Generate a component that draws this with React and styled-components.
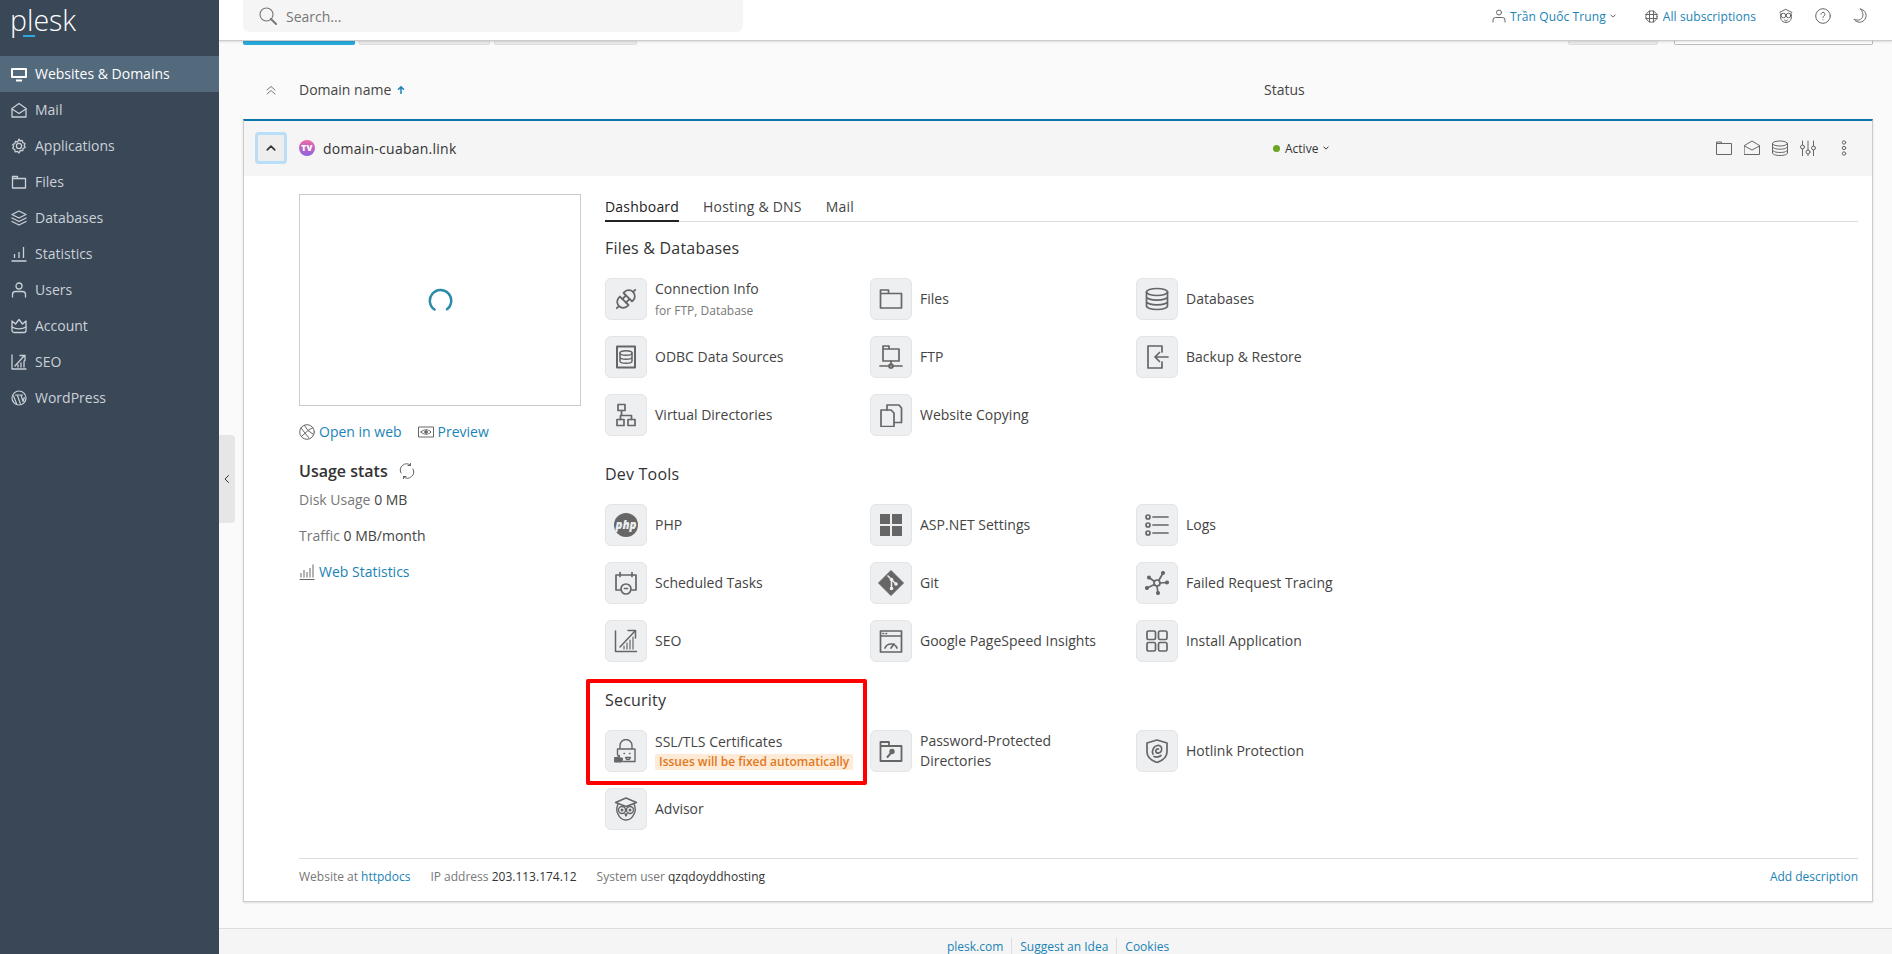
import React from "react";
import styled, { createGlobalStyle } from "styled-components";

const Global = createGlobalStyle`
  html, body { margin: 0; padding: 0; height: 100%; overflow: hidden; }
  body { font-family: "Open Sans", "Liberation Sans", sans-serif; font-size: 14px; color: #333; }
  * { box-sizing: border-box; }
`;

const Page = styled.div`display: flex; width: 1892px; height: 954px; overflow: hidden; background: #fafafa;`;
const Sidebar = styled.aside`flex: 0 0 219px; background: #394757; display: flex; flex-direction: column;`;
const LogoBox = styled.div`position: relative; height: 56px; padding: 0 0 0 10px; color: #fff; font-family: "Open Sans", sans-serif; font-weight: 300; font-size: 28.5px; line-height: 40px;`;
const LogoDash = styled.span`position: absolute; left: 23px; top: 35px; width: 12px; height: 2px; background: #28aade;`;
const NavItem = styled.div`
  height: 36px; display: flex; align-items: center; gap: 8px; padding: 0 0 1px 11px; font-size: 14px;
  color: ${p => (p.$active ? "#fff" : "#cbd1d7")};
  background: ${p => (p.$active ? "#53697c" : "transparent")};
`;
const Main = styled.div`flex: 1; min-width: 0; position: relative; display: flex; flex-direction: column;`;
const Handle = styled.div`position: absolute; left: 0; top: 435px; width: 16px; height: 88px; background: #e6e6e6; border-radius: 0 4px 4px 0; display: flex; align-items: center; justify-content: center; color: #333; z-index: 3;`;
const Header = styled.header`flex: 0 0 41px; height: 41px; background: #fff; border-bottom: 1px solid #ccc; box-shadow: 0 1px 2px rgba(0,0,0,.12); display: flex; align-items: flex-start; padding-left: 24px; position: relative; z-index: 2;`;
const Search = styled.div`width: 500px; height: 32px; background: #f5f5f5; border-radius: 0 0 6px 6px; display: flex; align-items: center; gap: 9px; padding-left: 16px; color: #777; font-size: 14px;`;
const HeaderRight = styled.div`margin-left: auto; height: 32px; display: flex; align-items: center; color: #666;`;
const HeaderLink = styled.span`font-size: 12px; color: #1a83b5; letter-spacing: .1px; font-weight: 500;`;
const HeaderGroup = styled.div`display: flex; align-items: center; gap: ${p => p.$gap || 4}px; margin-left: ${p => p.$ml || 0}px; color: #666;`;
const Content = styled.div`flex: 1; padding: 0 19px 0 24px; min-height: 0;`;
const Strip = styled.div`height: 4px; display: flex; gap: 4px;`;
const StripTab = styled.div`
  width: ${p => p.$w}px; height: 4px; margin-left: ${p => p.$ml || 0}px;
  background: ${p => (p.$blue ? "#28a9dc" : p.$white ? "#fff" : "#ebebeb")};
  border: 1px solid ${p => (p.$blue ? "#28a9dc" : p.$white ? "#bbb" : "#ddd")};
  border-top: 0; border-radius: 0 0 2px 2px;
`;
const Columns = styled.div`display: grid; grid-template-columns: 56px 965px 1fr; align-items: center;`;
const HeadRow = styled(Columns)`height: 74px; padding-top: 15px; color: #444; font-size: 14px;`;
const NameHead = styled.div`display: flex; align-items: center; gap: 6px;`;
const CenterCell = styled.div`display: flex; justify-content: center; color: #777;`;
const SortMark = styled.span`display: inline-flex; color: #1a83b5;`;
const Panel = styled.section`background: #fff; border: 1px solid #ccc; border-top: 2px solid #0a77a8; box-shadow: 0 1px 2px rgba(0,0,0,.12); height: 783px; position: relative;`;
const RowHead = styled(Columns)`height: 55px; padding-bottom: 1px; background: #f5f5f5; grid-template-columns: 55px 965px 1fr auto;`;
const ExpandBtn = styled.div`margin-left: 11px; width: 32px; height: 32px; border: 3px solid #b9defa; border-radius: 4px; background: #eee; display: flex; align-items: center; justify-content: center; color: #333;`;
const DomainCell = styled.div`display: flex; align-items: center; gap: 8px; font-size: 14px; font-weight: 500; color: #333; letter-spacing: .25px;`;
const StatusCell = styled.div`display: flex; align-items: center; gap: 5px; font-size: 12px; color: #333; padding-left: 9px;`;
const Dot = styled.span`width: 7px; height: 7px; border-radius: 50%; background: #6aa621; margin-right: 0;`;
const RowActions = styled.div`display: flex; align-items: center; padding-right: 20px; color: #666; gap: 12px;`;
const DotsWrap = styled.span`display: inline-flex; margin-left: 8px;`;
const Body = styled.div`display: grid; grid-template-columns: 282px 1fr; column-gap: 24px; padding: 18px 14px 0 55px;`;
const Preview = styled.div`height: 212px; border: 1px solid #ccc; display: flex; align-items: center; justify-content: center;`;
const LinksRow = styled.div`display: flex; gap: 16px; margin-top: 16px; height: 20px; align-items: center;`;
const IconLink = styled.span`display: inline-flex; align-items: center; gap: 4px; color: #1a83b5; font-size: 14px; line-height: 20px;`;
const GreyIcon = styled.span`display: inline-flex; color: #666;`;
const StatsTitle = styled.div`display: flex; align-items: center; gap: 11px; margin-top: 18px; font-size: 16px; font-weight: 600; color: #333; line-height: 22px;`;
const Stat = styled.div`font-size: 14px; line-height: 20px; margin-top: ${p => p.$mt}px; color: #777;`;
const StatVal = styled.span`color: #444;`;
const StatLink = styled.div`margin-top: 16px;`;
const Tabs = styled.div`display: flex; gap: 24px; height: 25px; border-bottom: 1px solid #ddd; margin-top: 3px; letter-spacing: .2px;`;
const Tab = styled.div`height: 25px; line-height: 20px; font-size: 14px; color: ${p => (p.$on ? "#222" : "#444")}; border-bottom: ${p => (p.$on ? "2px solid #222" : "0")};`;
const Section = styled.div`position: relative; margin-top: ${p => p.$mt}px;`;
const Heading = styled.h3`margin: 0 0 18px; font-size: 16px; font-weight: 500; letter-spacing: .2px; line-height: 24px; color: #333;`;
const ItemGrid = styled.div`display: grid; grid-template-columns: 265px 266px 1fr; row-gap: 16px;`;
const Item = styled.div`display: flex; align-items: center; gap: 8px; height: 42px;`;
const Tile = styled.div`flex: 0 0 42px; height: 42px; background: #edeff1; border: 1px solid #e2e4e6; border-radius: 6px; display: flex; align-items: center; justify-content: center; color: #666;`;
const ItemText = styled.div`max-width: 200px; font-size: 14px; line-height: 20px; color: #444;`;
const ItemSub = styled.div`font-size: 12px; line-height: 16px; color: #777; margin-top: 4px;`;
const Badge = styled.span`display: block; width: max-content; margin-top: 2px; padding: 0 4px; background: #fdead7; color: #e2781c; font-size: 12px; font-weight: 600; line-height: 16px; border-radius: 2px;`;
const RedBox = styled.div`position: absolute; left: -19px; top: -9px; width: 281px; height: 106px; border: 4px solid #ff0000; border-radius: 2px; pointer-events: none;`;
const PanelFoot = styled.div`position: absolute; left: 55px; right: 14px; top: 737px; height: 36px; border-top: 1px solid #ddd; display: flex; align-items: center; gap: 20px; font-size: 12px; color: #777;`;
const FootVal = styled.span`color: #333;`;
const FootLink = styled.span`color: #1a83b5;`;
const PushRight = styled(FootLink)`margin-left: auto;`;
const PageFoot = styled.footer`position: absolute; left: 0; right: 0; top: 928px; height: 40px; background: #f5f5f5; border-top: 1px solid #ddd; display: flex; justify-content: center; padding: 9px 0 0 5px; font-size: 12px; line-height: 18px; color: #1a83b5;`;
const FootItem = styled.span`padding: 0 8px; border-left: ${p => (p.$sep ? "1px solid #ddd" : "0")};`;

const SvgBase = styled.svg`width: ${p => p.$s}px; height: ${p => p.$s}px; flex: none; display: block;`;
const Ico = ({ s = 24, w = 1.7, vb = 24, children }) => (
  <SvgBase $s={s} viewBox={`0 0 ${vb} ${vb}`} fill="none" stroke="currentColor" strokeWidth={w} strokeLinecap="round" strokeLinejoin="round">{children}</SvgBase>
);

/* Sidebar */
const NavMonitor = () => <Ico s={16} vb={16} w={2}><path d="M1 3h14v8H1z" /><path d="M5 14.500h6" strokeLinecap="butt" /></Ico>;
const NavMail = () => <Ico s={16} vb={16} w={1.300}><path d="M1 6.500 8 1.500l7 5V15H1z" /><path d="M1 7l7 4.500L15 7" /></Ico>;
const NavGear = () => <Ico s={16} vb={16} w={1.300}><circle cx="8" cy="8" r="2.600" /><path d="M8 1l1 2 2.200-.6.6 2.200 2.200.9-.8 2 1 1.900-2 1-.5 2.300-2.300-.3L8 15l-1.500-1.600-2.300.4-.5-2.300-2-1 .9-2-.9-2 2.100-.9.6-2.200 2.200.6z" /></Ico>;
const NavFile = () => <Ico s={16} vb={16} w={1.300}><path d="M1.500 2.500h5v2h8V14h-13z" /><path d="M6.500 4.500h-5" /></Ico>;
const NavDb = () => <Ico s={16} vb={16} w={1.300}><path d="M8 1l7 3.500L8 8 1 4.500z" /><path d="M1 8l7 3.500L15 8M1 11.500 8 15l7-3.500" /></Ico>;
const NavStat = () => <Ico s={16} vb={16} w={1.300}><path d="M.5 15h15M3.500 12V8M8 12V6M12.500 12V1" strokeLinecap="butt" /></Ico>;
const NavUser = () => <Ico s={16} vb={16} w={1.300}><circle cx="8" cy="4" r="3" /><path d="M1.500 15v-2.500a3 3 0 0 1 3-3h7a3 3 0 0 1 3 3V15" /></Ico>;
const NavCrown = () => <Ico s={16} vb={16} w={1.300}><path d="M1 3l3.500 3L8 1.500 11.500 6 15 3v9.500a2 2 0 0 1-2 2H3a2 2 0 0 1-2-2z" /><path d="M1 9c4 2.500 10 2.500 14 0" /></Ico>;
const NavSeo = () => <Ico s={16} vb={16} w={1.300}><path d="M1 1v14h14M4 12l9-10M9 1.500h5v5M7 13v-2M10 13V9M13 13V7" /></Ico>;
const NavWp = () => <Ico s={16} vb={16} w={1.200}><circle cx="8" cy="8" r="7" /><path d="M2.500 6l3.200 8M4.500 5h3.500M6.300 5l3 8.500M8.800 5h2.700M10 5l2 6.500 1.300-4" /></Ico>;

/* Header */
const SearchIcon = () => <Ico s={18} vb={18} w={1.100}><circle cx="7.500" cy="7.500" r="6.500" /><path d="M12 12l5 5" strokeWidth="2" /></Ico>;
const UserSmall = () => <Ico s={14} vb={14} w={1}><circle cx="7" cy="3.500" r="2.500" /><path d="M1 13v-2a2.500 2.500 0 0 1 2.500-2.500h7A2.500 2.500 0 0 1 13 11v2" /></Ico>;
const Chevron = ({ up, s = 6 }) => <Ico s={s} vb={8} w={1.300}>{up ? <path d="M1 5.500l3-3 3 3" /> : <path d="M1 2.500l3 3 3-3" />}</Ico>;
const GlobeSmall = () => <Ico s={13} vb={13} w={1}><circle cx="6.500" cy="6.500" r="5.700" /><path d="M.8 4.500h11.400M.8 8.500h11.400M4.500 1v11M8.500 1v11" /></Ico>;
const OwlSmall = () => <Ico s={16} vb={16} w={1}><path d="M8 1.500l6 3-1 1c1.500 3.500 0 9-5 9s-6.500-5.500-5-9l-1-1z" /><circle cx="5.500" cy="7.500" r="2.300" /><circle cx="10.500" cy="7.500" r="2.300" /><path d="M6.500 12l1.500 1.200L9.500 12" /></Ico>;
const HelpSmall = () => <Ico s={16} vb={16} w={1}><circle cx="8" cy="8" r="7.300" /><path d="M6 6.200a2 2 0 1 1 3 1.800c-.7.400-1 .8-1 1.700M8 11.800v.1" /></Ico>;
const Moon = () => <Ico s={16} vb={16} w={1}><path d="M9.500 1c4 1 6 4 5.500 7.500-.6 4-4.500 6.500-8 5.500-1.600-.4-3-1.200-4-2.800 4 2 8 .5 8.800-3C12.300 6 11.500 3 9.500 1z" /></Ico>;

/* Row */
const DoubleUp = () => <Ico s={12} vb={12} w={1}><path d="M2 6l4-3.500L10 6M2 10l4-3.500L10 10" /></Ico>;
const SortUp = () => <Ico s={8} vb={8} w={1.500}><path d="M4 7.500V1M1.500 3.200 4 .8l2.500 2.400" /></Ico>;
const Favicon = () => (
  <SvgBase $s={16} viewBox="0 0 16 16">
    <defs><linearGradient id="fav" x1="0" y1="0" x2="0" y2="1"><stop offset="0" stopColor="#ee6aa7" /><stop offset="1" stopColor="#8f62dc" /></linearGradient></defs>
    <circle cx="8" cy="8" r="8" fill="url(#fav)" />
    <text x="8" y="10.800" textAnchor="middle" fontSize="8.500" fontWeight="800" fontFamily="Open Sans" fill="#fff">TV</text>
  </SvgBase>
);
const RFolder = () => <Ico s={16} vb={16} w={1}><path d="M.5 2h5v1.500h10v11H.5zM.5 3.500h5" strokeLinecap="butt" /></Ico>;
const RMail = () => <Ico s={16} vb={16} w={1}><path d="M.5 5.500 8 1l7.500 4.500v9H.5z" /><path d="M.5 6L8 10l7.500-4" /></Ico>;
const RDb = () => <Ico s={16} vb={16} w={1}><ellipse cx="8" cy="3.500" rx="7.500" ry="2.500" /><path d="M.5 3.500v9.500c0 1.400 3.400 2.500 7.500 2.500s7.500-1.100 7.500-2.500V3.500M.5 6.700c0 1.400 3.400 2.500 7.500 2.500s7.500-1.100 7.500-2.500M.5 10c0 1.400 3.400 2.500 7.500 2.500s7.500-1.100 7.500-2.500" /></Ico>;
const RSliders = () => <Ico s={16} vb={16} w={1}><path d="M2.500 1v4M2.500 9v7M8 1v9M8 14v2M13.500 1v5M13.500 10v6" /><circle cx="2.500" cy="7" r="2" /><circle cx="8" cy="12" r="2" /><circle cx="13.500" cy="8" r="2" /></Ico>;
const RDots = () => <Ico s={16} vb={16} w={1}><circle cx="8" cy="2.500" r="1.700" /><circle cx="8" cy="8" r="1.700" /><circle cx="8" cy="13.500" r="1.700" /></Ico>;
const Spinner = () => <SvgBase $s={25} viewBox="0 0 25 25" fill="none" stroke="#2b8ca6" strokeWidth="2.500" strokeLinecap="round"><path d="M6.500 21.500a10.700 10.700 0 1 1 12.500-.3" /></SvgBase>;
const OpenWeb = () => <Ico s={16} vb={16} w={1}><circle cx="8" cy="8" r="7.300" /><path d="M2 4l8 10M2.500 12.500 9 6.500l5.500 4M5.500 1.500 9 6.500l5-3" /></Ico>;
const Eye = () => <Ico s={16} vb={16} w={1}><path d="M.5 3h15v10H.5z" strokeLinecap="butt" /><path d="M3 8c2.500-3 7.500-3 10 0-2.500 3-7.500 3-10 0z" /><circle cx="8" cy="8" r="1.300" fill="currentColor" /></Ico>;
const Refresh = () => <Ico s={16} vb={16} w={1}><path d="M2 10a6.300 6.300 0 0 1 9.500-7.800M14 6a6.300 6.300 0 0 1-9.500 7.800" /><path d="M11.500 0v2.500H9M4.500 16v-2.500H7" /></Ico>;
const Bars = () => <Ico s={16} vb={16} w={1}><path d="M.5 15.500h15M2 13.500V9M5 13.500V6M8 13.500V8M11 13.500V4M14 13.500V.5" strokeLinecap="butt" /></Ico>;
const ChevLeft = () => <Ico s={10} vb={10} w={1}><path d="M6.500 1.500L3 5l3.500 3.500" /></Ico>;

/* Tiles */
const iPlug = <Ico w={1.800}><g transform="rotate(-45 12 12)"><path d="M9.500 6v12H8a6 6 0 0 1 0-12zM14.500 6v12H16a6 6 0 0 0 0-12z" /><path d="M2 12H-1M22 12h3M9.500 9.500h5M9.500 14.500h5" /></g></Ico>;
const iFolder = <Ico><path d="M1.500 3h8v3.500h13V21h-21zM1.500 6.500h8" strokeLinecap="butt" /></Ico>;
const iDatabase = <Ico><ellipse cx="12" cy="5" rx="10.500" ry="3.500" /><path d="M1.500 5v14c0 1.900 4.700 3.500 10.500 3.500S22.500 20.900 22.500 19V5M1.500 9.700c0 1.900 4.700 3.500 10.500 3.500s10.500-1.600 10.500-3.500M1.500 14.400c0 1.900 4.700 3.500 10.500 3.500s10.500-1.600 10.500-3.500" /></Ico>;
const iOdbc = <Ico w={1.500}><path d="M3 1.500h18v21H3z" strokeWidth="2" /><ellipse cx="12" cy="8" rx="6" ry="2.300" /><path d="M6 8v8c0 1.300 2.700 2.300 6 2.300s6-1 6-2.300V8M6 12c0 1.300 2.700 2.300 6 2.300s6-1 6-2.300" /></Ico>;
const iFtp = <Ico><path d="M4 1h6v3h10v12H4zM4 4h6" strokeLinecap="butt" /><path d="M12 16v5M1 21h8.500M14.500 21H23" /><circle cx="12" cy="21" r="2" /></Ico>;
const iBackup = <Ico><path d="M17 7V1H3v22h14v-6" /><path d="M23 12H10M14.500 7.500 10 12l4.500 4.500" /></Ico>;
const iVirtual = <Ico><path d="M4 1.500h7v6H4zM3 16.500h7v6H3zM14 16.500h7v6h-7z" /><path d="M7.500 7.500v5M6.500 16.500v-4h11v4" /></Ico>;
const iCopy = <Ico><path d="M2 7h10l3 3v13.500H2z" /><path d="M8 7V2h12l2.500 3v14.500h-7" /></Ico>;
const iPhp = (
  <SvgBase $s={24} viewBox="0 0 24 24">
    <circle cx="12" cy="12" r="12" fill="currentColor" />
    <text x="12" y="15.800" textAnchor="middle" fontSize="11.500" fontWeight="800" fontStyle="italic" fontFamily="Open Sans" fill="#edeff1">php</text>
  </SvgBase>
);
const iAsp = <SvgBase $s={24} viewBox="0 0 24 24" fill="currentColor"><path d="M1 1h10v10H1zM13 1h10v10H13zM1 13h10v10H1zM13 13h10v10H13z" /></SvgBase>;
const iLogs = <Ico><circle cx="3" cy="4" r="2" /><circle cx="3" cy="12" r="2" /><circle cx="3" cy="20" r="2" /><path d="M8 4h15M8 12h15M8 20h15" /></Ico>;
const iSched = <Ico><path d="M6 4H2v15h4M18 4h4v15h-4M6 1.500v4M18 1.500v4M6 4h12" /><circle cx="12" cy="18" r="5" /><path d="M10.500 17.500h3" /></Ico>;
const iGit = (
  <SvgBase $s={26} viewBox="0 0 26 26">
    <path d="M13 .5 25.500 13 13 25.500.5 13z" fill="currentColor" stroke="currentColor" strokeLinejoin="round" />
    <path d="M9.500 5.500l4 4M13.500 9.500v9M13.500 9.500l4.500 4.500" stroke="#edeff1" strokeWidth="1.500" fill="none" />
    <circle cx="13.500" cy="18.500" r="1.800" fill="#edeff1" /><circle cx="13.500" cy="9.500" r="1.800" fill="#edeff1" /><circle cx="18" cy="14" r="1.800" fill="#edeff1" />
  </SvgBase>
);
const iFailed = <Ico><circle cx="12" cy="12" r="3" /><path d="M12 15l1 7.500M15 12l7-.5M13.800 9.500 18 2M9.500 10.500 4 6.500M9.500 13.500 2 17" /><circle cx="13" cy="22" r="1.200" fill="currentColor" /><circle cx="22" cy="11.500" r="1.200" fill="currentColor" /><circle cx="18" cy="2" r="1.200" fill="currentColor" /><circle cx="4" cy="6.500" r="1.200" fill="currentColor" /><circle cx="2" cy="17" r="1.200" fill="currentColor" /></Ico>;
const iSeo = <Ico w={1.200}><path d="M1.500 2v20.500h21" strokeWidth="1.500" /><path d="M6 18 21 2M14 1.500h7.500V9" strokeWidth="1.500" /><path d="M10 20v-3M13 20v-6M16 20v-9M19 20V8" /></Ico>;
const iSpeed = <Ico><path d="M1.500 2h21v21h-21zM1.500 7h21" strokeLinecap="butt" /><path d="M4 4.500h.5M7 4.500h.5" /><path d="M6 19a6.500 6.500 0 0 1 12 0M12 19l3-4" /></Ico>;
const iInstall = <Ico><rect x="2" y="2" width="8.500" height="8.500" rx="1.500" /><rect x="13.500" y="2" width="8.500" height="8.500" rx="1.500" /><rect x="2" y="13.500" width="8.500" height="8.500" rx="1.500" /><rect x="13.500" y="13.500" width="8.500" height="8.500" rx="1.500" /></Ico>;
const iSsl = <Ico w={1.400}><path d="M6 10V6.500a6 6 0 0 1 12 0V10M3.500 10h17.500v12.500H9M3.500 10v6" /><path d="M10 14.500h.5M15.500 14.500h.5M11.500 18.500h5l-1.200 2h-2.600z" /><path d="M.8 18.500h2.400v4.500H.8zM3.200 23H8l.6-4H5.700l-.3-3-1 .5z" fill="currentColor" strokeWidth="1" /></Ico>;
const iPwd = <Ico w={1.800}><path d="M1.500 3h8.500v4h12.500v15h-21zM1.500 7H10" strokeLinecap="butt" /><path d="M8.500 18l3-3.500" strokeWidth="2" /><circle cx="13" cy="12.500" r="1.800" fill="currentColor" /></Ico>;
const iShield = <Ico><path d="M12 1l10 3v9c0 5-4.500 8.500-10 10.500C6.500 21.500 2 18 2 13V4z" /><path d="M8 15c-1.500-3 .5-8 4.500-8.500 3-.4 5 2 4 5-.8 2.500-4.500 3.500-5.500 1.500s1-3.500 2.500-3" /><path d="M9 17.500c2.500 1 5 .5 7-1" /></Ico>;
const iOwl = <Ico w={1.400}><path d="M12 1l10.500 4.500L12 9.500 1.500 5.500z" /><path d="M4 7c-2 5-1 8.500 0 10 1.500 3.500 4.500 6 8 6s6.500-2.500 8-6c1-1.500 2-5 0-10" /><circle cx="8" cy="13" r="3.500" /><circle cx="16" cy="13" r="3.500" /><circle cx="8" cy="13" r=".8" fill="currentColor" /><circle cx="16" cy="13" r=".8" fill="currentColor" /><path d="M11 17l1 2 1-2z" /></Ico>;

const navItems = [
  ["Websites & Domains", NavMonitor, true], ["Mail", NavMail], ["Applications", NavGear], ["Files", NavFile],
  ["Databases", NavDb], ["Statistics", NavStat], ["Users", NavUser], ["Account", NavCrown], ["SEO", NavSeo], ["WordPress", NavWp],
];

const Entry = ({ icon, children }) => (
  <Item><Tile>{icon}</Tile><ItemText>{children}</ItemText></Item>
);

export default function App() {
  return (
    <Page>
      <Global />
      <Sidebar>
        <LogoBox>plesk<LogoDash /></LogoBox>
        {navItems.map(([label, Icon, active]) => (
          <NavItem key={label} $active={active}><Icon />{label}</NavItem>
        ))}
      </Sidebar>
      <Main>
        <Handle><ChevLeft /></Handle>
        <Header>
          <Search><SearchIcon />Search...</Search>
          <HeaderRight>
            <HeaderGroup $gap={4}><UserSmall /><HeaderLink>Trần Quốc Trung</HeaderLink><Chevron /></HeaderGroup>
            <HeaderGroup $gap={5} $ml={29}><GlobeSmall /><HeaderLink>All subscriptions</HeaderLink></HeaderGroup>
            <HeaderGroup $ml={22}><OwlSmall /></HeaderGroup>
            <HeaderGroup $ml={21}><HelpSmall /></HeaderGroup>
            <HeaderGroup $ml={20}><Moon /></HeaderGroup>
            <HeaderGroup $ml={25} />
          </HeaderRight>
        </Header>
        <Content>
          <Strip>
            <StripTab $w={112} $blue />
            <StripTab $w={131} />
            <StripTab $w={143} />
            <StripTab $w={90} $ml={927} />
            <StripTab $w={199} $ml={12} $white />
          </Strip>
          <HeadRow>
            <CenterCell><DoubleUp /></CenterCell>
            <NameHead>Domain name <SortMark><SortUp /></SortMark></NameHead>
            <div>Status</div>
          </HeadRow>
          <Panel>
            <RowHead>
              <ExpandBtn><Chevron up s={10} /></ExpandBtn>
              <DomainCell><Favicon />domain-cuaban.link</DomainCell>
              <StatusCell><Dot />Active<Chevron /></StatusCell>
              <RowActions>
                <RFolder /><RMail /><RDb /><RSliders />
                <DotsWrap><RDots /></DotsWrap>
              </RowActions>
            </RowHead>
            <Body>
              <div>
                <Preview><Spinner /></Preview>
                <LinksRow>
                  <IconLink><GreyIcon><OpenWeb /></GreyIcon>Open in web</IconLink>
                  <IconLink><GreyIcon><Eye /></GreyIcon>Preview</IconLink>
                </LinksRow>
                <StatsTitle>Usage stats <GreyIcon><Refresh /></GreyIcon></StatsTitle>
                <Stat $mt={8}>Disk Usage <StatVal>0 MB</StatVal></Stat>
                <Stat $mt={16}>Traffic <StatVal>0 MB/month</StatVal></Stat>
                <StatLink><IconLink><GreyIcon><Bars /></GreyIcon>Web Statistics</IconLink></StatLink>
              </div>
              <div>
                <Tabs>
                  <Tab $on>Dashboard</Tab>
                  <Tab>Hosting &amp; DNS</Tab>
                  <Tab>Mail</Tab>
                </Tabs>
                <Section $mt={14}>
                  <Heading>Files &amp; Databases</Heading>
                  <ItemGrid>
                    <Entry icon={iPlug}>Connection Info<ItemSub>for FTP, Database</ItemSub></Entry>
                    <Entry icon={iFolder}>Files</Entry>
                    <Entry icon={iDatabase}>Databases</Entry>
                    <Entry icon={iOdbc}>ODBC Data Sources</Entry>
                    <Entry icon={iFtp}>FTP</Entry>
                    <Entry icon={iBackup}>Backup &amp; Restore</Entry>
                    <Entry icon={iVirtual}>Virtual Directories</Entry>
                    <Entry icon={iCopy}>Website Copying</Entry>
                  </ItemGrid>
                </Section>
                <Section $mt={26}>
                  <Heading>Dev Tools</Heading>
                  <ItemGrid>
                    <Entry icon={iPhp}>PHP</Entry>
                    <Entry icon={iAsp}>ASP.NET Settings</Entry>
                    <Entry icon={iLogs}>Logs</Entry>
                    <Entry icon={iSched}>Scheduled Tasks</Entry>
                    <Entry icon={iGit}>Git</Entry>
                    <Entry icon={iFailed}>Failed Request Tracing</Entry>
                    <Entry icon={iSeo}>SEO</Entry>
                    <Entry icon={iSpeed}>Google PageSpeed Insights</Entry>
                    <Entry icon={iInstall}>Install Application</Entry>
                  </ItemGrid>
                </Section>
                <Section $mt={26}>
                  <RedBox />
                  <Heading>Security</Heading>
                  <ItemGrid>
                    <Entry icon={iSsl}>SSL/TLS Certificates<Badge>Issues will be fixed automatically</Badge></Entry>
                    <Entry icon={iPwd}>Password-Protected Directories</Entry>
                    <Entry icon={iShield}>Hotlink Protection</Entry>
                    <Entry icon={iOwl}>Advisor</Entry>
                  </ItemGrid>
                </Section>
              </div>
            </Body>
            <PanelFoot>
              <span>Website at <FootLink>httpdocs</FootLink></span>
              <span>IP address <FootVal>203.113.174.12</FootVal></span>
              <span>System user <FootVal>qzqdoyddhosting</FootVal></span>
              <PushRight>Add description</PushRight>
            </PanelFoot>
          </Panel>
        </Content>
        <PageFoot>
          <FootItem>plesk.com</FootItem>
          <FootItem $sep>Suggest an Idea</FootItem>
          <FootItem $sep>Cookies</FootItem>
        </PageFoot>
      </Main>
    </Page>
  );
}
